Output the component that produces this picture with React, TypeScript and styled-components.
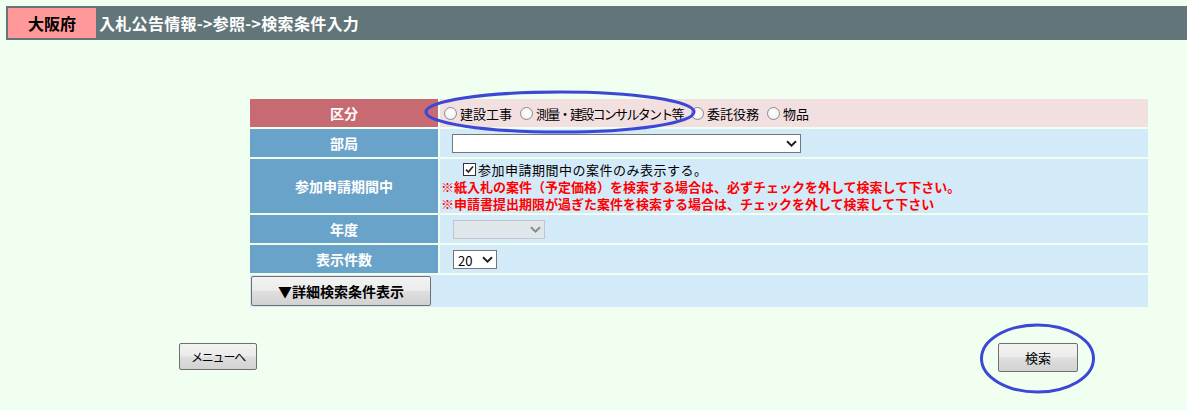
import React from "react";
import styled, { createGlobalStyle } from "styled-components";

const GlobalStyle = createGlobalStyle`
  html, body { margin: 0; padding: 0; background: #f0fff0; }
  body {
    font-family: "Noto Sans CJK JP", "Noto Sans", sans-serif;
    font-size: 13px;
    line-height: 17px;
    color: #000;
  }
  * { box-sizing: border-box; }
`;

const FONT = `"Noto Sans CJK JP", "Noto Sans", sans-serif`;

const Page = styled.div`
  position: relative;
  width: 1187px;
  height: 410px;
  padding-top: 6px;
  overflow: hidden;
`;

const HeaderBar = styled.header`
  margin-left: 6px;
  height: 34px;
  background: #627679;
  display: flex;
  align-items: center;
  padding: 2px;
  gap: 3px;
`;

const Pref = styled.div`
  width: 88px;
  height: 30px;
  background: #ff9999;
  color: #000;
  font-weight: bold;
  font-size: 16px;
  line-height: 30px;
  text-align: center;
`;

const Title = styled.h1`
  margin: 0;
  color: #fff;
  font-size: 16px;
  font-weight: bold;
  line-height: 30px;
  letter-spacing: 0.3px;
`;

const FormTable = styled.table`
  margin: 57px 0 0 248px;
  width: 902px;
  border-collapse: separate;
  border-spacing: 2px;
  table-layout: fixed;
`;

const Row = styled.tr<{ $h: number }>`
  height: ${(p) => p.$h}px;
`;

type Tone = "red" | "blue";

const LabelCell = styled.th<{ $tone: Tone }>`
  padding: 0;
  background: ${(p) => (p.$tone === "red" ? "#c86a71" : "#6aa3c9")};
  color: #fff;
  font-size: 14px;
  font-weight: bold;
  text-align: center;
  vertical-align: middle;
`;

const ValueCell = styled.td<{ $tone: Tone }>`
  padding: 0 1px;
  background: ${(p) => (p.$tone === "red" ? "#f2dfe0" : "#d3eaf9")};
  vertical-align: middle;
  text-align: left;
`;

const RadioGroup = styled.div`
  display: flex;
  align-items: center;
  height: 28px;
`;

const RadioItem = styled.label<{ $tight?: boolean }>`
  display: inline-flex;
  align-items: center;
  margin-right: 5px;
  font-size: 13px;
  letter-spacing: ${(p) => (p.$tight ? "-1.7px" : "0")};
  white-space: nowrap;
`;

const Radio = styled.input`
  appearance: none;
  -webkit-appearance: none;
  width: 13px;
  height: 13px;
  margin: 0 3px 0 3px;
  border: 1px solid #8c8c8c;
  border-radius: 50%;
  background: radial-gradient(circle at 50% 45%, #ffffff 0%, #f6f6f6 55%, #e2e2e2 100%);
  flex: none;
`;

const SelectWrap = styled.div<{ $w: number; $indent: number }>`
  position: relative;
  width: ${(p) => p.$w}px;
  height: 19px;
  margin-left: ${(p) => p.$indent}px;
`;

const Select = styled.select<{ $off?: boolean }>`
  appearance: none;
  -webkit-appearance: none;
  width: 100%;
  height: 100%;
  margin: 0;
  border: 1px solid ${(p) => (p.$off ? "#b8b8b8" : "#767676")};
  border-radius: 0;
  background: ${(p) => (p.$off ? "#e6e6e6" : "#ffffff")};
  font-family: ${FONT};
  font-size: 13px;
  color: #000;
  padding: 0 16px 0 4px;
  outline: none;
`;

const Chevron = styled.svg`
  position: absolute;
  right: 4px;
  top: 6px;
  pointer-events: none;
`;

const PeriodBox = styled.div`
  display: flex;
  flex-direction: column;
  line-height: 17px;
`;

const CheckLine = styled.label`
  display: flex;
  align-items: center;
  gap: 2px;
  padding-left: 22px;
  font-size: 13px;
  letter-spacing: 0.5px;
`;

const CheckBox = styled.span`
  display: inline-flex;
  align-items: center;
  justify-content: center;
  width: 13px;
  height: 13px;
  border: 1px solid #333;
  background: #fff;
  flex: none;
`;

const Note = styled.div`
  color: #ff0000;
  font-weight: bold;
  font-size: 13px;
  white-space: nowrap;
`;

const PushButton = styled.button<{ $w: number; $h: number; $size: number; $bold?: boolean }>`
  width: ${(p) => p.$w}px;
  height: ${(p) => p.$h}px;
  margin: 0;
  padding: 0;
  border: 1px solid #707070;
  border-radius: 2px;
  background: linear-gradient(#f3f3f3 0%, #ebebeb 48%, #dedede 52%, #d2d2d2 100%);
  font-family: ${FONT};
  font-size: ${(p) => p.$size}px;
  font-weight: ${(p) => (p.$bold ? "bold" : "normal")};
  color: #000;
  line-height: 1;
  cursor: pointer;
`;

const DetailCell = styled.td`
  padding: 1px;
  background: #d3eaf9;
  vertical-align: middle;
`;

const Footer = styled.div`
  display: flex;
  justify-content: space-between;
  align-items: flex-start;
  width: 899px;
  margin: 34px 0 0 179px;
`;

const MenuText = styled.span`
  letter-spacing: -1.2px;
`;

const Annotations = styled.svg`
  position: absolute;
  left: 0;
  top: 0;
  pointer-events: none;
`;

function ChevronIcon({ color }: { color: string }) {
  return (
    <Chevron width="11" height="7" viewBox="0 0 11 7">
      <path d="M1 1.2 L5.5 5.6 L10 1.2" fill="none" stroke={color} strokeWidth="2" />
    </Chevron>
  );
}

function Dropdown({
  w,
  indent,
  off,
  value,
}: {
  w: number;
  indent: number;
  off?: boolean;
  value?: string;
}) {
  return (
    <SelectWrap $w={w} $indent={indent}>
      <Select $off={off} disabled={off} defaultValue={value ?? ""}>
        <option value={value ?? ""}>{value ?? ""}</option>
      </Select>
      <ChevronIcon color={off ? "#8a8a8a" : "#222"} />
    </SelectWrap>
  );
}

const categories = [
  { label: "建設工事" },
  { label: "測量・建設コンサルタント等", tight: true },
  { label: "委託役務" },
  { label: "物品" },
];

export default function App() {
  return (
    <>
      <GlobalStyle />
      <Page>
        <HeaderBar>
          <Pref>大阪府</Pref>
          <Title>入札公告情報-&gt;参照-&gt;検索条件入力</Title>
        </HeaderBar>

        <FormTable>
          <colgroup>
            <col style={{ width: 188 }} />
            <col style={{ width: 708 }} />
          </colgroup>
          <tbody>
            <Row $h={28}>
              <LabelCell $tone="red">区分</LabelCell>
              <ValueCell $tone="red">
                <RadioGroup>
                  {categories.map((c) => (
                    <RadioItem key={c.label} $tight={c.tight}>
                      <Radio type="radio" name="kubun" />
                      {c.label}
                    </RadioItem>
                  ))}
                </RadioGroup>
              </ValueCell>
            </Row>
            <Row $h={28}>
              <LabelCell $tone="blue">部局</LabelCell>
              <ValueCell $tone="blue">
                <Dropdown w={349} indent={11} />
              </ValueCell>
            </Row>
            <Row $h={54}>
              <LabelCell $tone="blue">参加申請期間中</LabelCell>
              <ValueCell $tone="blue">
                <PeriodBox>
                  <CheckLine>
                    <CheckBox role="checkbox" aria-checked="true">
                      <svg width="9" height="9" viewBox="0 0 9 9">
                        <path d="M1 4.6 L3.4 7 L8 1.6" fill="none" stroke="#222" strokeWidth="1.6" />
                      </svg>
                    </CheckBox>
                    参加申請期間中の案件のみ表示する。
                  </CheckLine>
                  <Note>※紙入札の案件（予定価格）を検索する場合は、必ずチェックを外して検索して下さい。</Note>
                  <Note>※申請書提出期限が過ぎた案件を検索する場合は、チェックを外して検索して下さい</Note>
                </PeriodBox>
              </ValueCell>
            </Row>
            <Row $h={28}>
              <LabelCell $tone="blue">年度</LabelCell>
              <ValueCell $tone="blue">
                <Dropdown w={92} indent={12} off />
              </ValueCell>
            </Row>
            <Row $h={28}>
              <LabelCell $tone="blue">表示件数</LabelCell>
              <ValueCell $tone="blue">
                <Dropdown w={44} indent={12} value="20" />
              </ValueCell>
            </Row>
            <Row $h={32}>
              <DetailCell colSpan={2}>
                <PushButton $w={180} $h={30} $size={14} $bold>
                  ▼詳細検索条件表示
                </PushButton>
              </DetailCell>
            </Row>
          </tbody>
        </FormTable>

        <Footer>
          <PushButton $w={78} $h={27} $size={12}>
            <MenuText>メニューへ</MenuText>
          </PushButton>
          <PushButton $w={80} $h={29} $size={13}>
            検索
          </PushButton>
        </Footer>

        <Annotations width="1187" height="410" viewBox="0 0 1187 410">
          <ellipse cx="560" cy="112" rx="134" ry="20" fill="none" stroke="#3c47d4" strokeWidth="3" />
          <ellipse cx="1037.5" cy="358.5" rx="56" ry="33.5" fill="none" stroke="#3c47d4" strokeWidth="3" />
        </Annotations>
      </Page>
    </>
  );
}
